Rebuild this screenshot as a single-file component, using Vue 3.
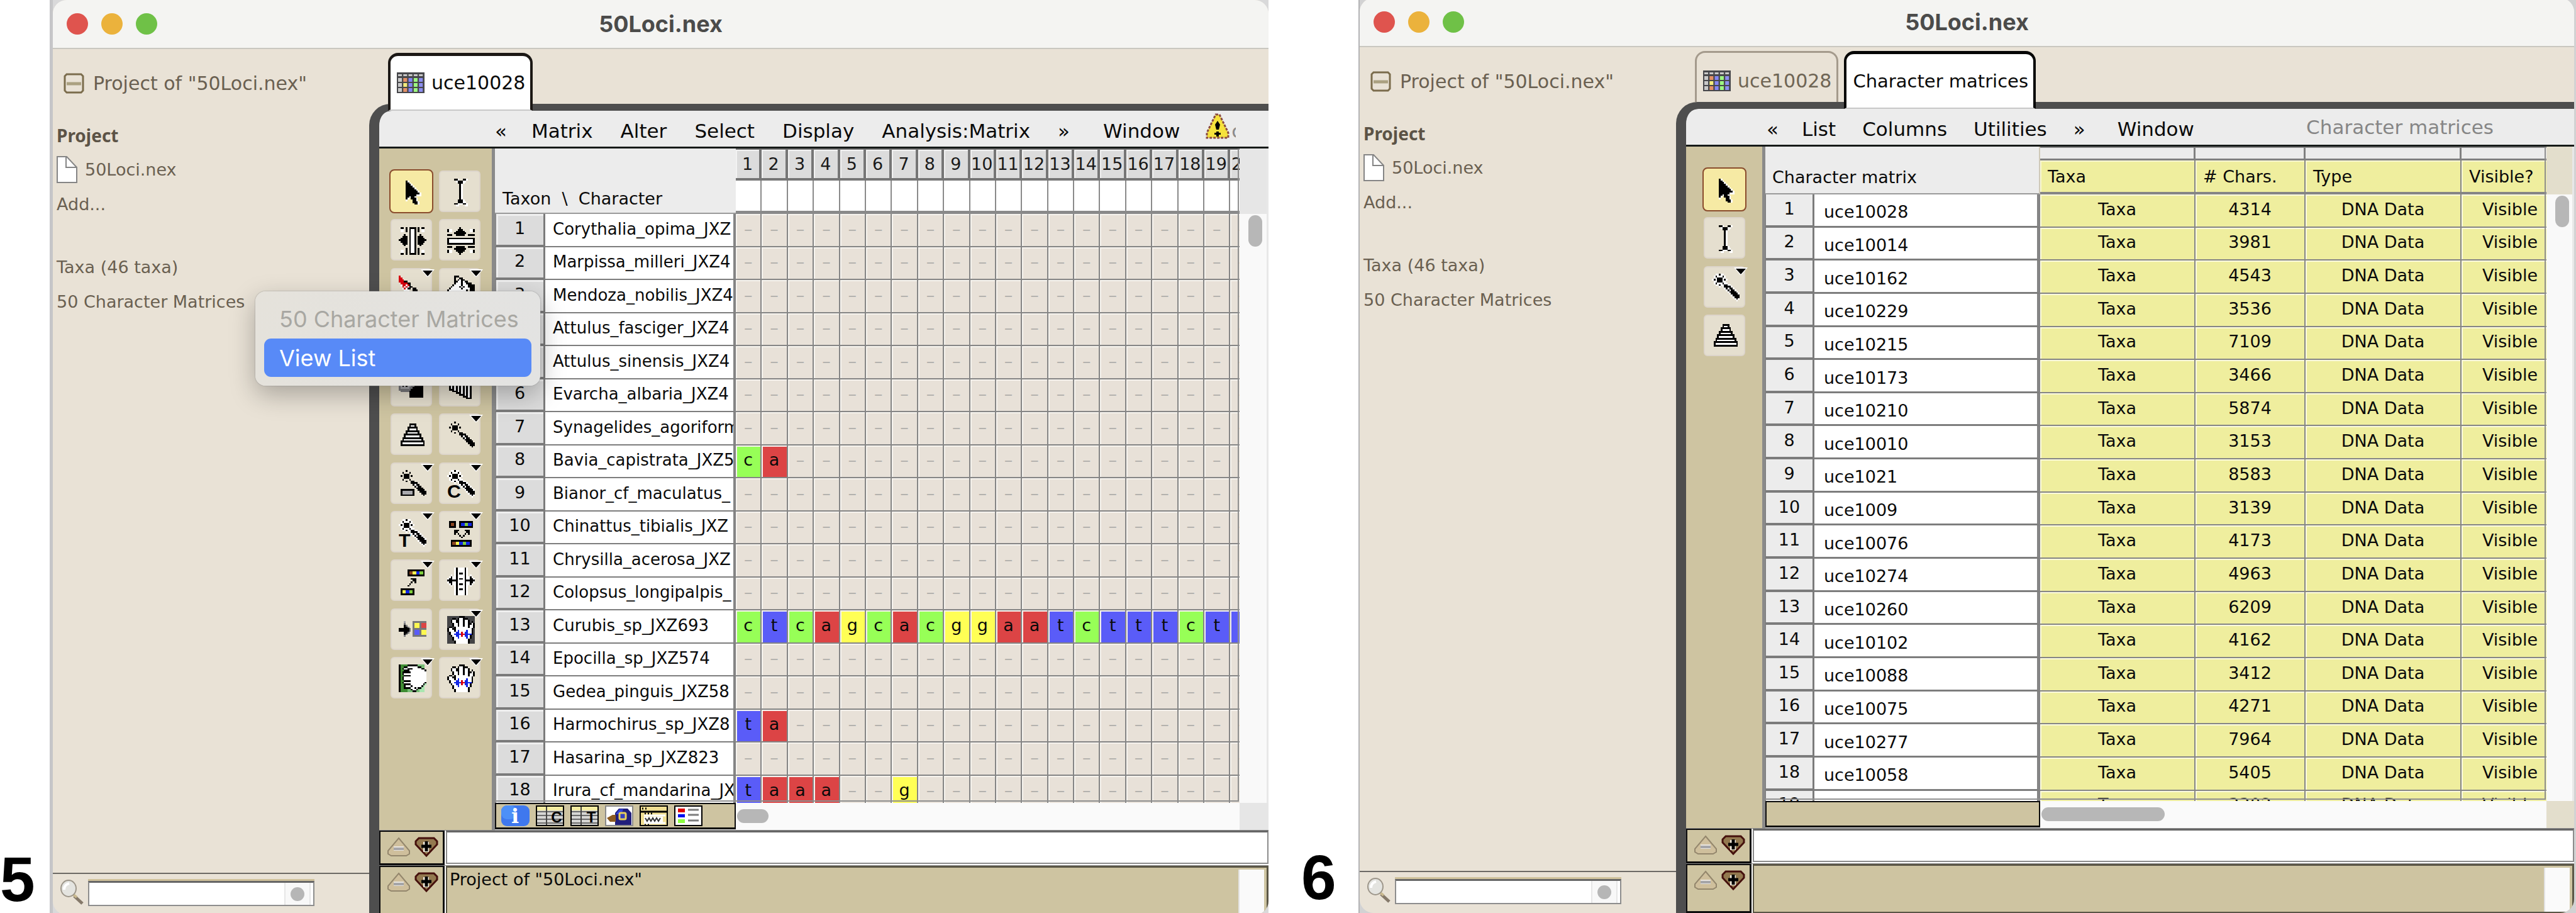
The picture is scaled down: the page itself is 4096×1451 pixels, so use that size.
<script setup>
const pad = (t) => t.padEnd(16, '.')

function halo(rows) {
  const g = Array.from({ length: 16 }, (_, y) => pad(rows[y] || '').split(''))
  return g.map((r, y) => r.map((c, x) => {
    if (c !== '.') return c
    const near = [[0, 1], [1, 0], [0, -1], [-1, 0]].some(([dx, dy]) => {
      const n = g[y + dy] && g[y + dy][x + dx]
      return n && n !== '.' && n !== 'w'
    })
    return near ? 'w' : '.'
  }).join(''))
}

const wand = [
  '....k', '..k...k', '...kkk', '.k.kkk.k', '...kkk', '..k...k', '....k..kk',
  '.......kkkk', '........kwkk', '.........kwkk', '..........kkkk', '...........kkkk',
  '............kkkk', '.............kkk', '..............k'
]
const columnsIn = [
  '.kk.k.kkkk.k.kk.', '.ww.k.kwwk.k.ww.', '.ww.k.kwwk.k.ww.', '......kwwk......',
  '...k..kwwk..k...', '..kkk.kwwk.kkk..', '.kkkk.kwwk.kkkk.', 'kkkkk.kwwk.kkkkk',
  '.kkkk.kwwk.kkkk.', '..kkk.kwwk.kkk..', '...k..kwwk..k...', '......kwwk......',
  '....k.kwwk.k....', '.ww.k.kwwk.k.ww.', '.ww.k.kwwk.k.ww.', '.kk.k.kkkk.k.kk.'
]
const rowsIn = Array.from({ length: 16 }, (_, y) => columnsIn.map((r) => r[y]).join(''))
const hand = [
  '.......kkk......', '...kk.kwwkkk....', '..kwwkkwwkwwk...', '..kwwkkwwkwwk.k.',
  '...kwwkwwkwwkkwk', '...kwwkwwkwwkwwk', '.kk.kwwwwwwwkwwk', 'kwwkkwwwwwwwwwk.',
  'kwwwkwuwwwwuwwk.', '.kwwwuuwrwuuwwk.', '.kwwuuuurruuuuk.', '..kwwuuwrwuuwk..',
  '...kwwuwwwwuwk..', '...kwwwwwwwwk...', '....kwwwwwwwk...', '....kwwwwwwwk...'
]

const art = {
  arrow: [
    '', '....kw', '....kkw', '....kkkw', '....kkkkw', '....kkkkkw', '....kkkkkkw',
    '....kkkkkkkw', '....kkkkkkkkw', '....kkkkkkwww', '....kkwkkw', '....kw.kkkw',
    '....w...kkw', '........kkkw', '.........kkw'
  ],
  ibeam: [
    '....kkw..kkw', '.....wkkkww', '......kkkw', '.......kw', '.......kw', '.......kw',
    '.......kw', '.......kw', '.......kw', '.......kw', '.......kw', '.......kw',
    '......kkkw', '......kkkww', '....kkwwwkkw', '.....ww...ww'
  ],
  columnsIn,
  rowsIn,
  pen: [
    'r', 'rr', 'rrr', 'rrrkk', '.rrrrkk', '.wrrwrk', '..rwrwkk', '..wrwkk.kk', '...www..kkk',
    '.........kkk', '..........kkk', '...........kk', '............kk'
  ],
  bucket: [
    '....kkk', '....k..kk', '....k.kwkk', '....kkwwkwkk', '....kwwwkwwkkk', '...kwwwwkwwwkkkk',
    '..kwwwwkwkwwkkkk', '.kwwwwwwkwwwwkkk', 'kwwwwwwwwwwk.kkk', '.kwwwwwwwwk..kkk',
    '..kwwwwwwk....kk', '...kwwwwk.....k.', '....kkkk'
  ],
  paste: [
    '', '', '', '', 'qqqqqqqqqq', 'qsssssssqq', 'qskskssqqkkkkk', 'qskskssqqkkkkk',
    'qsssssqqkkkkkk', 'qqqqqqqkkkkkkk', '.qqqqqkkkkkkkk', '......kkkkkkkk', '......kkkkkkkk',
    '......kkkkkkkk'
  ],
  bars: [
    '', '', '', '', '.kkk', '.kwkwk', '.kwkwkwkwkwk', '.kwkwkwkwkwkwk', '.kwkwkwkwkwkwk',
    '.kkkwkwkwkwkwk', '...kkkwkwkwkwk', '.....kkkwkwkwk', '.......kkkwkwk', '.........kkkwk',
    '...........kkk'
  ],
  pyramid: [
    '', '......kkkk', '......kwwk', '.....kkkkkk', '.....kwwwwk', '....kkkkkkkk', '....kwwwwwwk',
    '...kkkkkkkkkk', '...kwwwwwwwwk', '..kkkkkkkkkkkk', '..kwwwwwwwwwwk', '.kkkkkkkkkkkkkk',
    '.kwwwwwwwwwwwwk', '.kkkkkkkkkkkkkk'
  ],
  wand,
  wandHalo: halo(wand),
  wandBox: wand.map((r, y) => {
    if (y === 11 || y === 14) return '.kkkkkkkk' + pad(r).slice(9)
    if (y === 12 || y === 13) return '.kssssssk' + pad(r).slice(9)
    return r
  }),
  split: [
    '', '.kkkk..kkkkkkkk', '.kbbk..kuugguuk', '.kbbk..kuugguuk', '.kkkk..kkkkkkkk', '',
    '....kkk...kkk', '....kk.....kk', '....k.k...k.k', '.......k.k', '........k', '',
    '..kkkkkkkkkkkk', '..kbbyyuugguuk', '..kbbyyuugguuk', '..kkkkkkkkkkkk'
  ],
  move: [
    '', '.....kkkkkkkkkk', '.....kbbyyuuggk', '.....kbbyyuuggk', '.....kkkkkkkkkk', '',
    '.......kkk', '........kk', '.......k.k', '......k', '.....k', '',
    '.kkkkkkkk', '.kyyuuggk', '.kyyuuggk', '.kkkkkkkk'
  ],
  spread: halo([
    '.....kwwwwk', '.....kwwwwk', '.....kwwwwk', '.....kwkkwk', '.....kwwwwk', '..k..kwwwwk..k',
    '.kk..kwkkwk..kk', 'kkkkkkwwwwkkkkkk', '.kk..kwwwwk..kk', '..k..kwkkwk..k', '.....kwwwwk',
    '.....kwwwwk', '.....kwkkwk', '.....kwwwwk', '.....kwwwwk', '.....kwwwwk'
  ]),
  concat: [
    '', '', '', '...s....qqqqqqqq', '...q....qyyyqRRR', '...kq...qyyyqRRR', '...kkq..qyyyqRRR',
    'kkkkkkq.qqqqqqqq', 'kkkkkkq.qvvvqyyy', '...kkq..qvvvqyyy', '...kq...qvvvqyyy', '...q....qqqqqqqq'
  ],
  handDark: hand.map((r) => r.replace(/\./g, 'd')),
  handGreen: [
    'kGGGGkkkkkkHHHH.', 'kGGkkwwwwwwkkHH.', 'kGkwwkkkwwwwwkk.', 'kGGkkkwwwwwwwwwk',
    'kGkkkkkwwwwwwwww', 'kGkwwwwwwwwwwwww', 'kGGkkkkwwwwwwwww', 'kGkwwwwwwwwwwwww',
    'kGkwwwwwwwwwwwww', 'kGGkkkkwwwwwwwww', 'kGkwwwwwwwwwwwwk', 'kGGkkkkwwwwwwwkh',
    'kGGkwwwkwwwwwkh.', 'kGGkkkkwwkwkkhh.', 'kGGGGHHkwwkHhhh.', 'kGGGGHHHkkHHhhh.'
  ],
  hand
}
const ink = {
  k: '#000', w: '#fff', r: '#d80010', s: '#a9a9ad', q: '#77777a', b: '#8a4520', y: '#fdf850',
  u: '#1226e6', g: '#7ccc3e', d: '#444446', R: '#dc4445', v: '#5a5cf8', G: '#3f8c33',
  H: '#76bd74', h: '#a9e6b0'
}

function pixels(name) {
  const out = []
  art[name].forEach((row, y) => {
    for (let x = 0; x < row.length;) {
      let n = 1
      while (row[x + n] === row[x]) n++
      if (row[x] !== '.') out.push({ x, y, n, c: ink[row[x]] })
      x += n
    }
  })
  return out
}

const tool = (icon, label, menu = false, letter = '') => ({ icon, label, menu, letter })
const matrixTools = [
  tool('arrow', 'Arrow'), tool('ibeam', 'Edit'),
  tool('columnsIn', 'Column width'), tool('rowsIn', 'Row height'),
  tool('pen', 'Annotate', true), tool('bucket', 'Fill', true),
  tool('pyramid', 'Stack'), tool('wand', 'Select by value', true),
  tool('paste', 'Paste block'), tool('bars', 'Sort columns'),
  tool('pyramid', 'Sort taxa'), tool('wand', 'Wand', true),
  tool('wandBox', 'Select block', true), tool('wandHalo', 'Select characters', true, 'C'),
  tool('wandHalo', 'Select taxa', true, 'T'), tool('split', 'Split sequence', true),
  tool('move', 'Move block', true), tool('spread', 'Insert gaps', true),
  tool('concat', 'Colour block'), tool('handDark', 'Shift block', true),
  tool('handGreen', 'Shift to other', true), tool('hand', 'Shift sequence', true)
]
const listTools = [
  tool('arrow', 'Arrow'), tool('ibeam', 'Edit'), tool('wandHalo', 'Wand', true), tool('pyramid', 'Sort')
]

const cornerTitle = 'Taxon  \\  Character'
const taxa = [
  ['Corythalia_opima_JXZ'], ['Marpissa_milleri_JXZ4'], ['Mendoza_nobilis_JXZ4'],
  ['Attulus_fasciger_JXZ4'], ['Attulus_sinensis_JXZ4'], ['Evarcha_albaria_JXZ4'],
  ['Synagelides_agoriform'], ['Bavia_capistrata_JXZ5', 'ca'], ['Bianor_cf_maculatus_'],
  ['Chinattus_tibialis_JXZ'], ['Chrysilla_acerosa_JXZ'], ['Colopsus_longipalpis_'],
  ['Curubis_sp_JXZ693', 'ctcagcacggaatctttctt'], ['Epocilla_sp_JXZ574'], ['Gedea_pinguis_JXZ58'],
  ['Harmochirus_sp_JXZ8', 'ta'], ['Hasarina_sp_JXZ823'], ['Irura_cf_mandarina_JX', 'taaa--g']
].map(([name, seq = '']) => ({ name, cells: seq.padEnd(20, '-').split('') }))

const matrices = [
  ['uce10028', 4314], ['uce10014', 3981], ['uce10162', 4543], ['uce10229', 3536],
  ['uce10215', 7109], ['uce10173', 3466], ['uce10210', 5874], ['uce10010', 3153],
  ['uce1021', 8583], ['uce1009', 3139], ['uce10076', 4173], ['uce10274', 4963],
  ['uce10260', 6209], ['uce10102', 4162], ['uce10088', 3412], ['uce10075', 4271],
  ['uce10277', 7964], ['uce10058', 5405], ['', 3302]
]

const windows = [
  {
    id: 'matrix', label: '5', tools: matrixTools, note: 'Project of "50Loci.nex"',
    menus: ['«', 'Matrix', 'Alter', 'Select', 'Display', 'Analysis:Matrix', '»', 'Window'],
    tabs: [{ text: 'uce10028', icon: true, on: true }]
  },
  {
    id: 'list', label: '6', tools: listTools, note: '',
    menus: ['«', 'List', 'Columns', 'Utilities', '»', 'Window'],
    tabs: [{ text: 'uce10028', icon: true, on: false }, { text: 'Character matrices', icon: false, on: true }]
  }
]
const cellInk = [
  ['#c9c9c9', '#e59066', '#8486f4', '#9df781', '#8c8ef0'],
  ['#c9c9c9', '#f4ec7c', '#8486f4', '#9df781', '#8c8ef0'],
  ['#c9c9c9', '#e59066', '#8486f4', '#9df781', '#8c8ef0']
]
</script>

<template>
  <div class="page">
    <section v-for="w in windows" :key="w.id" class="panel" :class="w.id">
      <div class="label">{{ w.label }}</div>
      <div class="backdrop">
        <div class="window">
          <header class="titlebar">
            <div class="lights"><i class="red"></i><i class="amber"></i><i class="green"></i></div>
            <h1>50Loci.nex</h1>
          </header>
          <div class="body">
            <aside class="sidebar">
              <div class="project">
                <svg width="33" height="33" viewBox="0 0 33 33" fill="none" stroke="#7b6c4c" stroke-width="3">
                  <path d="M5 2h23l3 3v23l-3 3H5l-3-3V5z" />
                  <path d="M5 17h23" stroke="#aba181" stroke-width="5" />
                </svg>
                <span>Project of "50Loci.nex"</span>
              </div>
              <ul class="tree">
                <li class="strong">Project</li>
                <li>
                  <svg width="33" height="44" viewBox="0 0 33 44" stroke="#858585" stroke-width="2">
                    <path d="M1 1h15l16 17v24H1z" fill="#fff" /><path d="M15 1v17h17" fill="none" />
                  </svg>
                  <a href="#file">50Loci.nex</a>
                </li>
                <li><a href="#add">Add...</a></li>
                <li class="apart"><a href="#taxa">Taxa (46 taxa)</a></li>
                <li><a href="#matrices">50 Character Matrices</a></li>
              </ul>
              <div class="search">
                <svg width="42" height="42" viewBox="0 0 42 42">
                  <path d="M24 27l13 12" stroke="#85796a" stroke-width="5" />
                  <path d="M23 25l5 4" stroke="#c9b98f" stroke-width="4" />
                  <ellipse cx="15" cy="15" rx="12" ry="13" fill="#e4e4e0" stroke="#9d968a" stroke-width="2" />
                  <path d="M8 17c0-6 4-9 8-10" stroke="#fff" stroke-width="4" fill="none" />
                </svg>
                <div class="field"><input type="text" aria-label="Search project"><span><i></i></span></div>
              </div>
            </aside>
            <main class="main">
              <nav class="tabs">
                <button v-for="t in w.tabs" :key="t.text" type="button" class="tab" :class="{ on: t.on }">
                  <svg v-if="t.icon" width="44" height="33" viewBox="0 0 44 33">
                    <rect width="44" height="33" fill="#47474b" />
                    <g v-for="(r, y) in cellInk" :key="y">
                      <rect v-for="(c, x) in r" :key="x" :x="2 + x * 8.3" :y="9 + y * 8" width="6" height="6" :fill="c" />
                    </g>
                    <rect v-for="x in 5" :key="x" :x="x * 8.3 - 6.3" y="3" width="6" height="3" fill="#c9c9c9" />
                  </svg>
                  <span>{{ t.text }}</span>
                </button>
              </nav>
              <div class="frame">
                <div class="menubar">
                  <button v-for="m in w.menus" :key="m" type="button" :class="{ more: m === '«', last: m === 'Window' }">{{ m }}</button>
                  <template v-if="w.id === 'matrix'">
                    <svg class="warn" width="40" height="42" viewBox="0 0 40 42">
                      <path d="M17 2h6l14 29v8H3v-8z" fill="#f6e23c" stroke="#8a4b42" stroke-width="3" stroke-dasharray="4 2" />
                      <path d="M20 12l4 6-2 8h-4l-2-8z" /><path d="M18 29h4v2h3v3h-3v3h-4v-3h-3v-3h3z" />
                    </svg>
                    <span class="cut">c</span>
                  </template>
                  <span v-else class="crumb">Character matrices</span>
                </div>
                <div class="work">
                  <div class="toolbar">
                    <div class="tools" :class="w.id">
                      <button v-for="(t, i) in w.tools" :key="i" type="button" class="tool" :class="{ on: !i }" :aria-label="t.label">
                        <svg width="44" height="44" viewBox="0 0 16 16" shape-rendering="crispEdges">
                          <rect v-for="(p, k) in pixels(t.icon)" :key="k" :x="p.x" :y="p.y" :width="p.n" height="1" :fill="p.c" />
                          <text v-if="t.letter" x="0" y="16">{{ t.letter }}</text>
                        </svg>
                        <svg v-if="t.menu" class="drop" width="22" height="12" viewBox="0 0 22 12">
                          <path d="M0 0h22L12 12h-2z" fill="#fff" /><path d="M3 2h16l-8 9z" />
                        </svg>
                      </button>
                    </div>
                  </div>
                  <div class="content">
                    <div class="upper">
                      <div class="pane">
                        <table v-if="w.id === 'matrix'" class="matrix-table">
                          <colgroup><col class="num"><col class="name"><col v-for="n in 20" :key="n"></colgroup>
                          <thead>
                            <tr>
                              <th rowspan="2" colspan="2" class="corner">{{ cornerTitle }}</th>
                              <th v-for="n in 20" :key="n" class="col">{{ n }}</th>
                            </tr>
                            <tr><td v-for="n in 20" :key="n" class="blank"></td></tr>
                          </thead>
                          <tbody>
                            <tr v-for="(t, i) in taxa" :key="i">
                              <th class="rownum">{{ i + 1 }}</th>
                              <td class="name">{{ t.name }}</td>
                              <td v-for="(c, j) in t.cells" :key="j" class="site" :class="c === '-' ? 'gap' : c">{{ c === '-' ? '–' : c }}</td>
                            </tr>
                          </tbody>
                        </table>
                        <table v-else class="list-table">
                          <colgroup><col class="num"><col class="name"><col class="taxa"><col class="chars"><col class="type"><col></colgroup>
                          <thead>
                            <tr><th rowspan="2" colspan="2" class="corner">Character matrix</th><td v-for="n in 4" :key="n" class="grip"></td></tr>
                            <tr><th class="head">Taxa</th><th class="head"># Chars.</th><th class="head">Type</th><th class="head">Visible?</th></tr>
                          </thead>
                          <tbody>
                            <tr v-for="(m, i) in matrices" :key="i">
                              <th class="rownum">{{ i + 1 }}</th>
                              <td class="name">{{ m[0] }}</td>
                              <td class="val">Taxa</td><td class="val">{{ m[1] }}</td><td class="val">DNA Data</td><td class="val">Visible</td>
                            </tr>
                          </tbody>
                        </table>
                      </div>
                      <div class="vscroll"><span></span></div>
                    </div>
                    <div class="lower">
                      <div class="info">
                        <template v-if="w.id === 'matrix'">
                          <svg width="45" height="33" viewBox="0 0 45 33">
                            <rect width="45" height="33" rx="9" fill="#3f78ee" /><rect width="24" height="22" rx="9" fill="#4d90f8" />
                            <text x="22" y="28" text-anchor="middle" class="glyph-i">i</text>
                          </svg>
                          <svg v-for="l in ['C', 'T']" :key="l" width="45" height="33" viewBox="0 0 45 33">
                            <rect x="1" y="1" width="43" height="31" fill="#d6d6d4" stroke="#000" stroke-width="2" />
                            <path d="M2 2h41v6H2z" fill="#f5eda2" />
                            <path d="M2 10h41M2 16h41M2 22h41M2 28h41" stroke="#6b6b6b" stroke-width="2" />
                            <path d="M17 2v29" stroke="#444" stroke-width="2" />
                            <text x="33" y="27" text-anchor="middle" class="glyph-l">{{ l }}</text>
                          </svg>
                          <svg width="45" height="33" viewBox="0 0 45 33">
                            <rect x="1" y="1" width="43" height="31" fill="#fff" stroke="#8a8a8a" stroke-width="2" />
                            <path d="M16 31V12l6-7h14l6 7v19z" fill="#221f7c" /><path d="M17 14l6-8h6l-3 8z" fill="#3142d8" />
                            <path d="M3 20l9-5h5v11H8z" fill="#8c5a20" />
                            <rect x="23" y="12" width="10" height="10" rx="2" fill="#3540c0" stroke="#e8cf5a" stroke-width="3" />
                          </svg>
                          <svg width="45" height="33" viewBox="0 0 45 33">
                            <rect x="1" y="1" width="43" height="31" fill="#f0de92" stroke="#000" stroke-width="2" />
                            <path d="M2 10h41" stroke="#000" stroke-width="3" /><path d="M4 5h7M8 13h15M8 30h10" stroke="#000" stroke-width="3" stroke-dasharray="2 3" />
                            <path d="M7 16h34M7 28h34" stroke="#fff" stroke-width="3" /><path d="M7 18h30v9H7z" fill="#fff" />
                            <path d="M9 20l3 5 3-5 3 5 3-5 3 5 3-5 3 5 3-5" fill="none" stroke="#333" stroke-width="2" />
                          </svg>
                          <svg width="45" height="33" viewBox="0 0 45 33">
                            <rect x="1" y="1" width="43" height="31" fill="#fff" stroke="#000" stroke-width="2" />
                            <path d="M6 5h11v6H6z" fill="#e00000" /><path d="M6 14h11v5H6z" fill="#0010f0" /><path d="M6 22h11v6H6z" fill="#8cff40" />
                            <path d="M22 7h17M22 15h17M22 24h17" stroke="#7c7c7c" stroke-width="3" />
                          </svg>
                        </template>
                      </div>
                      <div class="hscroll"><span></span></div>
                      <div class="nook"></div>
                    </div>
                  </div>
                </div>
                <div v-for="row in 2" :key="row" class="message" :class="'row' + row">
                  <div class="stepper">
                    <button type="button" aria-label="Smaller">
                      <svg width="40" height="32" viewBox="0 0 40 32">
                        <path d="M20 2l17 20v5l-5 3H8l-5-3v-5z" fill="#cfbf9c" stroke="#93866c" stroke-width="2" />
                        <path d="M12 15h16v7H12z" fill="#e8e4de" /><path d="M12 17h16v4H12z" fill="#a5a5a8" />
                      </svg>
                    </button>
                    <button type="button" aria-label="Larger">
                      <svg width="40" height="32" viewBox="0 0 40 32">
                        <path d="M8 2h24l5 5v5L20 30 3 12V7z" fill="#93794f" stroke="#45100c" stroke-width="3" />
                        <path d="M15 8h9v16h-9z" fill="#f2ecdf" /><path d="M20 7v16M12 15h16" stroke="#000" stroke-width="5" />
                      </svg>
                    </button>
                  </div>
                  <input v-if="row === 1" type="text" class="command" aria-label="Command">
                  <div v-else class="note"><p>{{ w.note }}</p><span class="track"></span></div>
                </div>
              </div>
            </main>
          </div>
        </div>
      </div>
      <div v-if="w.id === 'matrix'" class="popup">
        <div class="popup-title">50 Character Matrices</div>
        <button type="button">View List</button>
      </div>
    </section>
  </div>
</template>

<style>
body { margin: 0; overflow: hidden; }
</style>

<style scoped>
* { box-sizing: border-box; }
button, input { font: inherit; color: inherit; background: none; border: 0; padding: 0; margin: 0; border-radius: 0; }
a { color: inherit; text-decoration: none; }
svg { display: block; flex: none; }
.page { display: flex; height: 100vh; overflow: hidden; background: #fff; font-family: "DejaVu Sans", "Noto Sans", sans-serif; font-size: 27px; line-height: 38px; color: #0a0a0a; }
.panel { position: relative; display: flex; min-width: 0; }
.panel.matrix { flex: 1 1 2017px; }
.panel.list { flex: 1 1 2079px; }
.label { flex: none; width: 79px; padding: 0 0 4px 0; display: flex; align-items: flex-end; font: bold 100px/100px "Liberation Sans", Arial, sans-serif; color: #000; }
.list .label { width: 143px; padding: 0 0 7px 52px; }
.backdrop { flex: 1; min-width: 0; height: calc(100vh + 3px); padding-left: 5px; background: linear-gradient(90deg, #c6c6c8 0 5px, #d9d9da 5px); }
.list .backdrop { margin-top: -3px; padding: 0 3px 0 2px; background: linear-gradient(90deg, #b3b3b5 0 2px, #d2d2d3 2px); }
.window { height: 100%; display: flex; flex-direction: column; overflow: hidden; border-radius: 22px; background: #e9e2d6; }
.titlebar { position: relative; flex: none; height: 78px; border-bottom: 2px solid #c9c7c0; background: #f4f4f2; display: flex; align-items: center; justify-content: center; }
.titlebar h1 { margin: 0; font: bold 36px/44px Inter, sans-serif; color: #4b4b4a; }
.lights { position: absolute; left: 22px; top: 21px; display: flex; gap: 21px; }
.lights i { width: 34px; height: 34px; border-radius: 50%; }
.red { background: #df544e; } .amber { background: #ebb23c; } .green { background: #6fc147; }
.body { flex: 1; min-height: 0; display: flex; }

.sidebar { flex: none; width: 503px; display: flex; flex-direction: column; color: #6a6051; }
.project { height: 109px; padding-left: 17px; display: flex; align-items: center; gap: 14px; font-size: 30px; }
.tree { list-style: none; margin: 0; padding: 0 0 0 6px; flex: 1; }
.tree li { height: 55px; display: flex; align-items: center; gap: 12px; white-space: nowrap; }
.tree .strong { font: bold 28px/38px "Noto Sans", sans-serif; color: #5c5346; }
.tree .apart { margin-top: 45px; }
.search { flex: none; height: 67px; border-top: 2px solid #6d6a65; padding: 8px 0 0 10px; display: flex; gap: 4px; }
.field { width: 360px; height: 40px; display: flex; background: #fff; border: 2px solid #8d8d8d; border-top: 3px solid #666; box-shadow: 0 -3px 0 #cfc19b; margin-top: 3px; }
.field input { flex: 1; min-width: 0; outline: 0; }
.field span { width: 42px; margin-right: 4px; border: 2px solid #e6e6e6; border-width: 0 2px; background: #f8f8f8; display: flex; align-items: center; justify-content: center; }
.field i { width: 22px; height: 22px; border-radius: 11px; background: #b6b6b6; }

.main { flex: 1; min-width: 0; display: flex; flex-direction: column; }
.tabs { flex: none; height: 87px; padding: 6px 0 0 30px; display: flex; align-items: flex-start; gap: 9px; position: relative; z-index: 1; }
.tab { height: 81px; border: 3px solid #a49a8c; border-bottom: 0; border-radius: 16px 16px 0 0; display: flex; align-items: center; gap: 11px; padding: 11px 8px 0 10px; font-size: 30px; color: #6f6555; white-space: nowrap; }
.tab.on { height: 92px; border: 4px solid #1c1815; border-top-width: 5px; border-bottom: 2px solid #c8c8c8; background: #fff; color: #0a0a0a; padding: 0 8px 0 10px; }
.list .tab.on { font-size: 29px; border-color: #050505; border-bottom-color: #c8c8c8; }
.frame { flex: 1; min-height: 0; display: flex; flex-direction: column; background: #4e4e4e; border-left: 16px solid #4e4e4e; border-top: 11px solid #4e4e4e; border-radius: 34px 0 0 0; overflow: hidden; }
.menubar { flex: none; height: 60px; border-bottom: 3px solid #161a18; background: #ececec; border-radius: 20px 0 0 0; padding: 6px 0 0 184px; display: flex; align-items: center; gap: 44px; font-size: 31px; line-height: 44px; white-space: nowrap; }
.list .menubar { gap: 42px; padding: 6px 128px 0 128px; }
.more { margin-right: -5px; }
.last { margin-left: 9px; }
.crumb { margin: 0 0 6px auto; color: #868686; }
.warn { margin: 0 -42px 14px -4px; }
.cut { width: 7px; overflow: hidden; color: #8a8a8a; }
.work { flex: 1; min-height: 0; display: flex; }
.toolbar { flex: none; background: #cec4a1; border-right: 5px solid #8a8a8a; padding: 35px 18px 0; }
.list .toolbar { padding: 35px 27px 0 28px; }
.tools { display: grid; grid-template-columns: 66px 66px; column-gap: 11px; align-content: space-between; height: 839px; }
.tools.list { grid-template-columns: 66px; height: 298px; }
.tool { position: relative; height: 66px; border: 2px solid #ddd5cb; border-radius: 6px; background: #e5dfcf; display: flex; align-items: center; justify-content: center; padding: 3px 0 0 3px; }
.tool.on { background: #f6eaa4; border-color: #f6eaa4; outline: 2px solid #8a4c2c; }
.tool text { font: bold 11px "Liberation Sans", Arial, sans-serif; }
.drop { position: absolute; right: -6px; top: 0; }

.content { flex: 1; min-width: 0; display: flex; flex-direction: column; background: #ececec; }
.upper { flex: 1; min-height: 0; display: flex; }
.pane { position: relative; flex: 1; min-width: 0; overflow: hidden; }
.pane::after { content: ""; position: absolute; inset: 0 1px 2px 0; border: solid #8f8f8f; border-width: 0 2px 2px 0; }
table { table-layout: fixed; border-collapse: separate; border-spacing: 0; }
th { font-weight: normal; }
th, td { padding: 0; overflow: hidden; white-space: nowrap; text-align: center; }
tbody th, tbody td { padding-bottom: 3px; }
.corner { background: #ececec; text-align: left; vertical-align: bottom; border-bottom: 2px solid #9a9a9a; white-space: pre; }
.name { text-align: left; background: #fff; }

.matrix-table { width: 1211px; height: 1049px; }
.matrix-table col.num { width: 80px; }
.matrix-table col.name { width: 303px; }
.matrix-table thead tr { height: 51px; }
.matrix-table thead tr + tr { height: 53px; }
.matrix-table .corner { padding: 0 0 3px 12px; }
.col { background: #dcdcdc; border: solid #767676; border-width: 2px 4px 4px 0; box-shadow: inset 2px 2px 0 #f2f2f2; color: #1a1a1a; overflow: visible; }
.blank { background: #fff; border: solid #8a8a8a; border-width: 0 2px 5px 0; }
.matrix-table .rownum { background: #dcdcdc; border: solid #7b7b7b; border-width: 0 3px 4px 2px; border-left-color: #8a8a8a; box-shadow: inset 3px 3px 0 #efefef; }
.matrix-table tbody .name { border-right: 4px solid #858585; border-bottom: 2px solid #7d7d7d; padding-left: 12px; font-size: 26px; }
.site { border: solid #858585; border-width: 0 2px 2px 0; box-shadow: inset 2px 2px 0 #f6f3ee; background: #e8e1d8; }
.gap { color: #b4b2ae; }
.c { background: #97ff57; } .t { background: #5a5cf8; } .a { background: #dc4445; } .g { background: #ffff55; }

.list-table { width: 1263px; height: 1073px; }
.list-table col.num { width: 78px; }
.list-table col.name { width: 359px; }
.list-table col.taxa { width: 247px; }
.list-table col.chars { width: 175px; }
.list-table col.type { width: 248px; }
.list-table thead tr { height: 22px; }
.list-table thead tr + tr { height: 54px; }
.list-table .corner { padding: 0 0 6px 11px; border-right: 2px solid #cfc9b8; }
.grip { background: #ececec; border: solid #808080; border-width: 2px 3px 3px 0; }
.head { background: #efee9e; border: solid #858585; border-width: 0 2px 4px 0; box-shadow: inset 2px 2px 0 #f8f7d2; text-align: left; padding: 2px 0 0 12px; }
.list-table .rownum { background: #ececec; border: solid #7b7b7b; border-width: 0 3px 4px 1px; }
.list-table tbody .name { border-right: 5px solid #858585; border-bottom: 3px solid #7d7d7d; padding: 7px 0 0 15px; }
.val { background: #efee9e; border: solid #858585; border-width: 0 2px 2px 0; box-shadow: inset 2px 2px 0 #fbfade; }

.vscroll { flex: none; width: 46px; background: linear-gradient(#e6e6e6, #e6e6e6) top / 100% 104px no-repeat, #f9f9f9; border-right: 3px solid #e8e8e8; padding: 106px 0 0 14px; }
.vscroll span { display: block; width: 22px; height: 50px; border-radius: 11px; background: #b7b7b7; }
.list .vscroll { width: 44px; background: linear-gradient(#e3decc, #e3decc) top / 100% 76px no-repeat, #f9f9f9; padding-top: 78px; }
.lower { flex: none; height: 43px; display: flex; }
.info { flex: none; width: 383px; height: 42px; border: 2px solid #0d0d0d; border-bottom-width: 3px; background: #cec4a1; display: flex; align-items: center; gap: 10px; padding-left: 8px; }
.list .info { width: 437px; }
.hscroll { flex: 1; background: #fafafa; padding: 10px 0 0 2px; }
.hscroll span { display: block; width: 50px; height: 22px; border-radius: 11px; background: #b7b7b7; }
.list .hscroll span { width: 196px; }
.nook { flex: none; width: 46px; background: #e6e6e6; }
.list .nook { width: 44px; background: #e3decc; }
.glyph-i { font: bold 32px "DejaVu Serif", serif; fill: #fff; }
.glyph-l { font: bold 24px "Liberation Sans", Arial, sans-serif; }

.message { flex: none; display: flex; gap: 2px; background: #fff; border-top: 1px solid #8a8a8a; }
.row1 { height: 56px; }
.row2 { height: 79px; }
.stepper { flex: none; width: 104px; border: 2px solid #0d0d0d; border-width: 2px 3px 3px 2px; background: #cec4a1; display: flex; align-items: flex-start; gap: 4px; padding: 8px 0 0 9px; }
.command { flex: 1; min-width: 0; height: 53px; border: 2px solid #8c8c8c; border-top: 3px solid #666; background: #fff; outline: 0; }
.note { flex: 1; min-width: 0; background: #cec4a1; border: solid #5a5646; border-width: 3px 3px 2px 2px; display: flex; }
.note p { flex: 1; margin: 0; padding: 0 0 0 4px; }
.track { width: 41px; margin: 3px 4px 0 0; background: #fafafa; border-left: 2px solid #e2e2e2; }

.popup { position: absolute; left: 406px; top: 463px; width: 453px; height: 150px; border-radius: 16px; padding: 14px; background: linear-gradient(100deg, #e5e2db, #e3e3e2); box-shadow: 0 0 2px #8a8a8a, 0 14px 40px rgba(0, 0, 0, 0.28); font: 36px/60px Inter, sans-serif; z-index: 2; }
.popup-title { padding: 0 0 0 24px; height: 61px; color: #a8a7a2; white-space: nowrap; }
.popup button { width: 100%; height: 61px; border-radius: 11px; padding-left: 24px; background: #588af7; color: #fff; text-align: left; }
</style>
